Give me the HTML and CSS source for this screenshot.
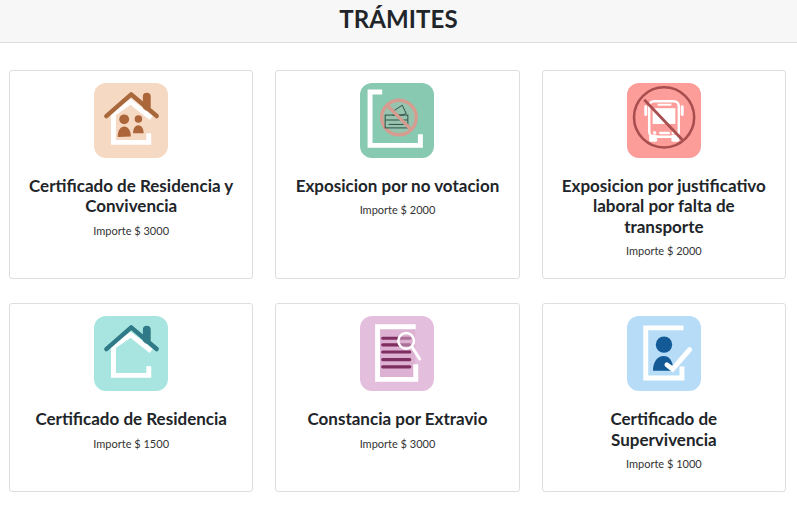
FILE: index.html
```html
<!DOCTYPE html>
<html lang="es">

<head>
  <meta charset="UTF-8" />
  <meta name="viewport" content="width=device-width, initial-scale=1.0" />
  <title>Trámites</title>
  <link rel="stylesheet" href="styles.css">
</head>

<body>
  <header class="top-bar">
    <h1>TRÁMITES</h1>
  </header>

  <main class="tramites">
    <a class="card" href="#">
      <svg class="icon icon-peach" viewBox="0 0 75 75">
        <rect x="49.500" y="9.500" width="8" height="18" rx="4" fill="#ad653a" />
        <path class="frame" d="M55.500 50.300V59.700H19.700V30.500L37.200 18.500 58 35" />
        <path d="M12.500 33 37.700 11 63.500 33" fill="none" stroke="#a9683c" stroke-width="4.500" stroke-linecap="round" stroke-linejoin="round" />
        <g fill="#ad653a">
          <circle cx="30.600" cy="36.300" r="5" />
          <path d="M24 54.300c0-7 3-10.600 6.700-10.600s6.600 4 6.600 10z" />
          <circle cx="45" cy="36" r="3.800" />
          <path d="M39.600 50.300c0-5 2.400-8 5.300-8s5.400 3 5.400 8z" />
        </g>
      </svg>
      <h2>Certificado de Residencia y Convivencia</h2>
      <p>Importe $ 3000</p>
    </a>

    <a class="card" href="#">
      <svg class="icon icon-green" viewBox="0 0 75 75">
        <path class="frame" d="M22.500 8.700H10.200V62.700H61.200V51.500" />
        <circle cx="39.500" cy="34.500" r="17.500" fill="#96c4ae" stroke="#d69c90" stroke-width="3.500" />
        <path d="M32.800 28.700 42.800 22 46.800 30.300 39.500 33.700z" fill="#96c4ae" stroke="#2f4f48" stroke-width="1" />
        <rect x="25.500" y="32" width="23" height="13" fill="#96c4ae" stroke="#2f4f48" stroke-width="1" />
        <path d="M25.500 37H48.500M29 41.500H45M33 32H44" stroke="#2f4f48" stroke-width="1" />
        <path d="M27 21.500 52 47" stroke="#d69c90" stroke-width="3.500" />
      </svg>
      <h2>Exposicion por no votacion</h2>
      <p>Importe $ 2000</p>
    </a>

    <a class="card" href="#">
      <svg class="icon icon-red" viewBox="0 0 75 75">
        <g fill="#fff">
          <rect x="17.500" y="22" width="3" height="11" rx="1.500" />
          <rect x="54.500" y="22" width="3" height="11" rx="1.500" />
          <rect x="22.500" y="52" width="8" height="7" rx="1.500" />
          <rect x="45" y="52" width="8" height="7" rx="1.500" />
          <rect x="26" y="25" width="23" height="16" />
          <rect x="31" y="20.500" width="14" height="2" />
          <circle cx="28" cy="50" r="1.800" />
          <circle cx="47" cy="50" r="1.800" />
          <rect x="32.500" y="49" width="11" height="2.500" rx="1" />
        </g>
        <rect x="22.500" y="18" width="30" height="36" rx="5" fill="none" stroke="#fff" stroke-width="2.500" />
        <circle cx="37.600" cy="34.300" r="30.500" fill="none" stroke="#a84e4f" stroke-width="2.600" />
        <path d="M17.500 16.500 56 57" stroke="#a84e4f" stroke-width="2.800" />
      </svg>
      <h2>Exposicion por justificativo laboral por falta de transporte</h2>
      <p>Importe $ 2000</p>
    </a>

    <a class="card" href="#">
      <svg class="icon icon-aqua" viewBox="0 0 75 75">
        <rect x="49.500" y="9.500" width="8" height="18" rx="4" fill="#2f7a86" />
        <path class="frame" d="M55.500 50.300V59.700H19.700V30.500L37.200 18.500 58 35" />
        <path d="M12.500 33 37.700 11 63.500 33" fill="none" stroke="#2f7a86" stroke-width="4.500" stroke-linecap="round" stroke-linejoin="round" />
      </svg>
      <h2>Certificado de Residencia</h2>
      <p>Importe $ 1500</p>
    </a>

    <a class="card" href="#">
      <svg class="icon icon-pink" viewBox="0 0 75 75">
        <rect x="18" y="10.500" width="38" height="53" fill="#dcb1d2" />
        <path class="frame" d="M56.500 10.300H17.800V63.700H56.500V48.500" />
        <path d="M23 22H50.500M23 28.700H50.500M23 36H50.500M23 43.700H50.500M23 51H50.500" stroke="#7e2e60" stroke-width="3.200" stroke-linecap="round" />
        <circle cx="46.800" cy="24.700" r="8" fill="#dcb1d2" fill-opacity=".5" stroke="#fff" stroke-width="2.500" />
        <path d="M52.500 30.500 60.500 43" stroke="#fff" stroke-width="3" stroke-linecap="round" />
      </svg>
      <h2>Constancia por Extravio</h2>
      <p>Importe $ 3000</p>
    </a>

    <a class="card" href="#">
      <svg class="icon icon-blue" viewBox="0 0 75 75">
        <path class="frame" d="M57.300 11.500H19V62.300H55.700V50.700" />
        <circle cx="37.500" cy="28.500" r="8.300" fill="#135a96" />
        <path d="M26.300 55c0-9 4.500-15 11-15 5 0 9 3.500 10 15z" fill="#135a96" />
        <path d="M40.500 49 46.200 53.300 63.500 33.500" fill="none" stroke="#fff" stroke-width="5" stroke-linecap="round" />
      </svg>
      <h2>Certificado de Supervivencia</h2>
      <p>Importe $ 1000</p>
    </a>
  </main>
</body>

</html>
```

FILE: styles.css
```css
* {
  box-sizing: border-box;
  margin: 0;
  padding: 0;
}

body {
  font-family: Lato, "Open Sans", sans-serif;
  background: #ffffff;
  color: #212529;
}

.top-bar {
  height: 43px;
  background: #f7f7f7;
  border-bottom: 1px solid #dddddd;
  text-align: center;
}

h1 {
  font-size: 24px;
  line-height: 38px;
  font-weight: 700;
  letter-spacing: 0.1px;
}

.tramites {
  display: grid;
  grid-template-columns: repeat(3, 1fr);
  gap: 24px 22px;
  padding: 27px 11px 0 9px;
}

.card {
  display: flex;
  flex-direction: column;
  align-items: center;
  padding: 12px 16px 20px;
  border: 1px solid #dedede;
  border-radius: 3px;
  color: inherit;
  text-align: center;
  text-decoration: none;
}

.icon {
  width: 74px;
  height: 75px;
  border-radius: 12px;
  margin-bottom: 18px;
}

.icon .frame {
  fill: none;
  stroke: #ffffff;
  stroke-width: 5;
}

.icon-peach { background: #f6d9c3; }
.icon-green { background: #88c9b1; }
.icon-red { background: #fd9d99; }
.icon-aqua { background: #a9e5e0; }
.icon-pink { background: #e4bfdd; }
.icon-blue { background: #b6dcf8; }

h2 {
  font-size: 17px;
  line-height: 1.2;
  font-weight: 700;
}

.card p {
  margin-top: 7px;
  font-size: 11px;
  line-height: 14px;
  color: #333333;
}
```
